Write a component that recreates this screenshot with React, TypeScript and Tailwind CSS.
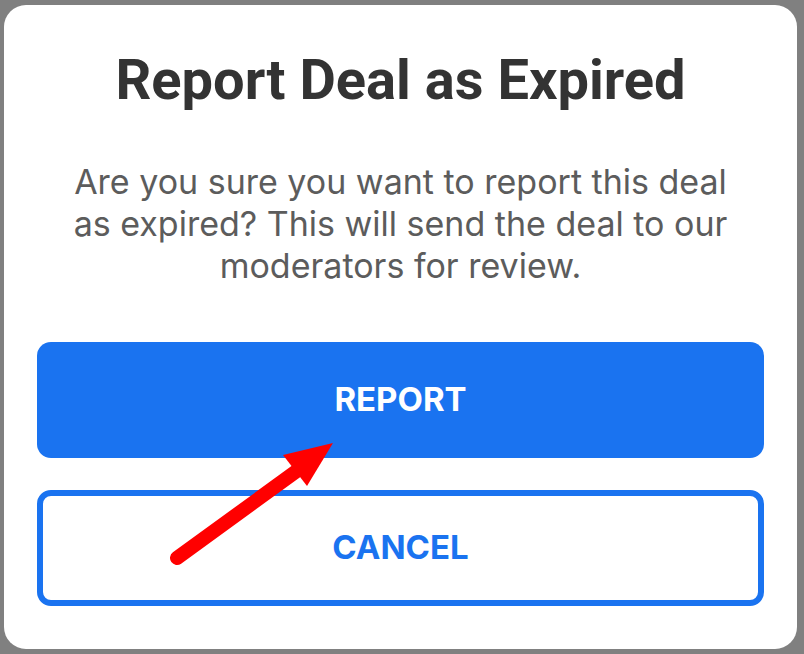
export default function App() {
  return (
    <div className="relative h-[654px] w-[804px] overflow-hidden bg-[#808080] pl-[4px] pr-[7px] py-[5px] font-['Inter',sans-serif]">
      {/* Modal */}
      <div className="flex h-full flex-col rounded-[22px] bg-white px-[33px] pt-[42px]">
        <h1 className="text-center font-['Roboto',sans-serif] text-[56px] font-bold leading-[66px] text-[#333333]">
          Report Deal as Expired
        </h1>

        <p className="mt-[48px] text-center text-[34px] font-normal leading-[42px] text-[#5c5c5c]">
          Are you sure you want to report this deal
          <br />
          as expired? This will send the deal to our
          <br />
          moderators for review.
        </p>

        <div className="mt-[55px] flex flex-col gap-[32px]">
          <button className="flex h-[116px] items-center justify-center rounded-[14px] bg-[#1a73f0] text-[33px] font-bold text-white">
            REPORT
          </button>
          <button className="flex h-[116px] items-center justify-center rounded-[14px] border-[6px] border-[#1a73f0] bg-white text-[33px] font-bold text-[#1a73f0]">
            CANCEL
          </button>
        </div>
      </div>

      {/* Annotation arrow */}
      <svg
        className="pointer-events-none absolute left-0 top-0"
        width="804"
        height="654"
        viewBox="0 0 804 654"
      >
        <line
          x1="177"
          y1="558"
          x2="298"
          y2="470"
          stroke="#ff0000"
          strokeWidth="14"
          strokeLinecap="round"
        />
        <polygon points="333,443 283,455 307,486" fill="#ff0000" />
      </svg>
    </div>
  );
}
